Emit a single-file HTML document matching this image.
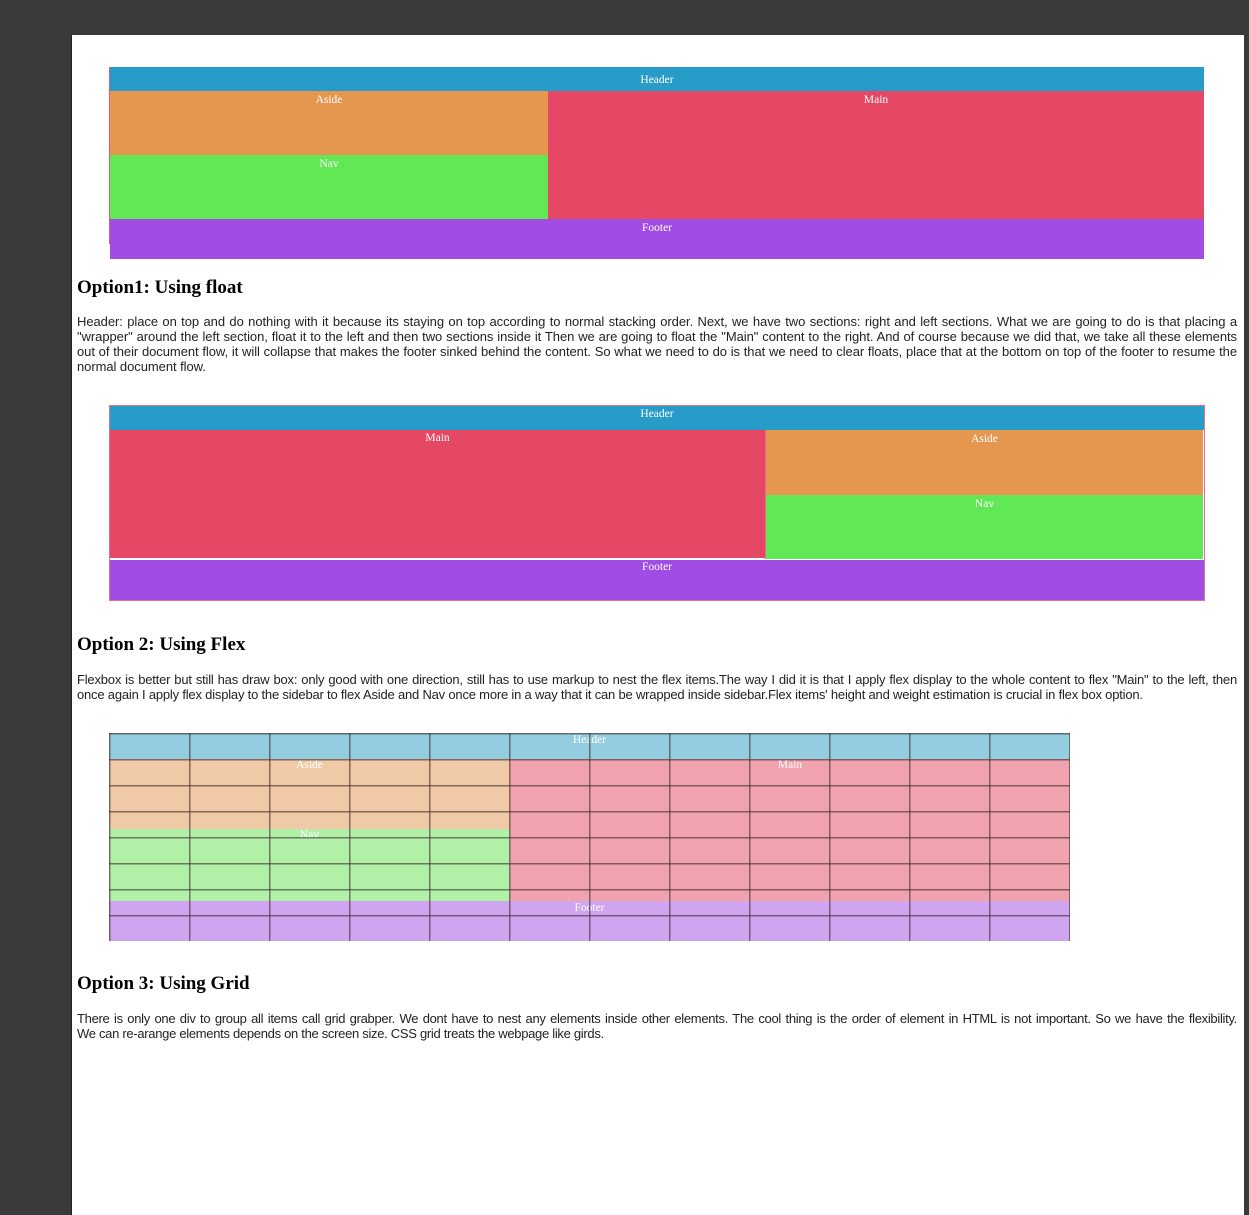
<!DOCTYPE html>
<html><head><meta charset="utf-8"><style>
html,body{margin:0;padding:0;}
body{width:1249px;height:1208px;background:#3a3a3a;position:relative;overflow:hidden;font-family:"Liberation Sans",Arial,sans-serif;}
#page{position:absolute;left:71px;top:35px;width:1172px;height:1180px;background:#fff;border-left:1px solid #222;}
.b{position:absolute;box-sizing:border-box;color:#fff;font-family:"Liberation Serif",serif;font-size:11.5px;text-align:center;line-height:13px;padding-top:3px;}
h2{position:absolute;left:77px;margin:0;font-family:"Liberation Serif",serif;font-size:19px;font-weight:bold;color:#000;}
p{position:absolute;left:77px;width:1160px;margin:0;font-size:13px;line-height:15px;text-align:justify;color:#222;letter-spacing:-0.06px;}
.j{display:block;text-align-last:justify;white-space:nowrap;}
.g{position:absolute;left:109px;top:733px;width:961px;height:208px;
background-image:linear-gradient(to right,rgba(60,40,40,.6) 1.5px,transparent 1.5px),linear-gradient(to bottom,rgba(60,40,40,.6) 1.5px,transparent 1.5px);
background-size:80px 100%,100% 26px;}
</style></head><body>
<div id="page"></div>

<div class="b" style="left:109px;top:67px;width:2px;height:177px;background:#e55a70;padding:0"></div>
<div class="b" style="left:110px;top:67px;width:1094px;height:24px;background:#289cc8;padding-top:7px">Header</div>
<div class="b" style="left:110px;top:91px;width:438px;height:64px;background:#e5974f">Aside</div>
<div class="b" style="left:110px;top:155px;width:438px;height:64px;background:#61e854">Nav</div>
<div class="b" style="left:548px;top:91px;width:656px;height:128px;background:#e54864">Main</div>
<div class="b" style="left:110px;top:219px;width:1094px;height:40px;background:#a14de4;padding-top:3px">Footer</div>

<h2 style="top:277px">Option1: Using float</h2>
<p style="top:314px">Header: place on top and do nothing with it because its staying on top according to normal stacking order. Next, we have two sections: right and left sections. What we are going to do is that placing a "wrapper" around the left section, float it to the left and then two sections inside it Then we are going to float the "Main" content to the right. And of course because we did that, we take all these elements out of their document flow, it will collapse that makes the footer sinked behind the content. So what we need to do is that we need to clear floats, place that at the bottom on top of the footer to resume the normal document flow.</p>

<div class="b" style="left:109px;top:405px;width:1096px;height:196px;border:1px solid #e87088;background:#fff;padding:0"></div>
<div class="b" style="left:110px;top:406px;width:1094px;height:24px;background:#289cc8;padding-top:2px">Header</div>
<div class="b" style="left:110px;top:430px;width:655px;height:128px;background:#e54864;padding-top:2px">Main</div>
<div class="b" style="left:765px;top:430px;width:438px;height:65px;background:#e5974f;border-left:1px solid #e87088">Aside</div>
<div class="b" style="left:765px;top:495px;width:438px;height:64px;background:#61e854;border-left:1px solid #e87088">Nav</div>
<div class="b" style="left:110px;top:560px;width:1094px;height:40px;background:#a14de4;padding-top:1px">Footer</div>

<h2 style="top:634px">Option 2: Using Flex</h2>
<p style="top:672px;letter-spacing:-0.2px">Flexbox is better but still has draw box: only good with one direction, still has to use markup to nest the flex items.The way I did it is that I apply flex display to the whole content to flex "Main" to the left, then once again I apply flex display to the sidebar to flex Aside and Nav once more in a way that it can be wrapped inside sidebar.Flex items' height and weight estimation is crucial in flex box option.</p>

<div class="b" style="left:109px;top:733px;width:961px;height:26px;background:#94cde0;padding-top:1px">Header</div>
<div class="b" style="left:109px;top:759px;width:401px;height:70px;background:#f0c9a6;padding-top:0">Aside</div>
<div class="b" style="left:109px;top:829px;width:401px;height:72px;background:#b1f1a7;padding-top:0">Nav</div>
<div class="b" style="left:510px;top:759px;width:560px;height:142px;background:#f0a2ae;padding-top:0">Main</div>
<div class="b" style="left:109px;top:901px;width:961px;height:40px;background:#d0a5f0;padding-top:1px">Footer</div>
<div class="g"></div>

<h2 style="top:973px">Option 3: Using Grid</h2>
<p style="top:1011px;letter-spacing:-0.3px"><span class="j">There is only one div to group all items call grid grabper. We dont have to nest any elements inside other elements. The cool thing is the order of element in HTML is not important. So we have the flexibility.</span>We can re-arange elements depends on the screen size. CSS grid treats the webpage like girds.</p>
</body></html>
